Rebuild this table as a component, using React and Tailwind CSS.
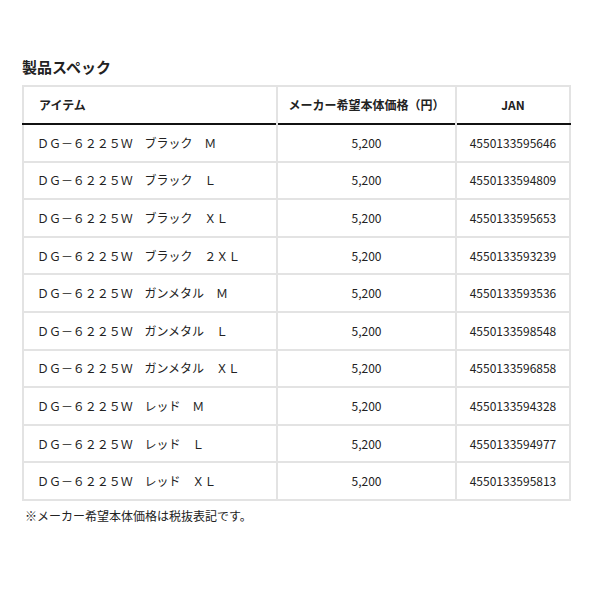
import React from 'react';

const rows = [
  ['ＤＧ－６２２５Ｗ　ブラック　Ｍ', '4550133595646'],
  ['ＤＧ－６２２５Ｗ　ブラック　Ｌ', '4550133594809'],
  ['ＤＧ－６２２５Ｗ　ブラック　ＸＬ', '4550133595653'],
  ['ＤＧ－６２２５Ｗ　ブラック　２ＸＬ', '4550133593239'],
  ['ＤＧ－６２２５Ｗ　ガンメタル　Ｍ', '4550133593536'],
  ['ＤＧ－６２２５Ｗ　ガンメタル　Ｌ', '4550133598548'],
  ['ＤＧ－６２２５Ｗ　ガンメタル　ＸＬ', '4550133596858'],
  ['ＤＧ－６２２５Ｗ　レッド　Ｍ', '4550133594328'],
  ['ＤＧ－６２２５Ｗ　レッド　Ｌ', '4550133594977'],
  ['ＤＧ－６２２５Ｗ　レッド　ＸＬ', '4550133595813'],
];

export default function App() {
  return (
    <div className="w-[600px] h-[600px] bg-white text-[#222] font-['Noto_Sans_CJK_JP',sans-serif]">
      <div className="pl-[22px] pt-[57px] w-[571px]">
        <h2 className="text-[15px] font-bold leading-[20px] h-[28px]">製品スペック</h2>

        <table className="w-[549px] border-collapse border-2 border-[#e3e3e3] table-fixed">
          <colgroup>
            <col className="w-[254px]" />
            <col className="w-[179px]" />
            <col />
          </colgroup>
          <thead>
            <tr className="h-[38px] border-b-2 border-[#111]">
              <th className="text-left pl-[15px] text-[12px] font-bold border-r-2 border-[#e3e3e3]">アイテム</th>
              <th className="text-center text-[12px] font-bold border-r-2 border-[#e3e3e3]">メーカー希望本体価格（円）</th>
              <th className="text-center text-[12px] font-bold">JAN</th>
            </tr>
          </thead>
          <tbody>
            {rows.map(([name, jan]) => (
              <tr key={jan} className="h-[37.6px] border-b-2 border-[#e3e3e3]">
                <td className="pl-[13px] text-[12px] tracking-[-0.05px] border-r-2 border-[#e3e3e3] whitespace-nowrap">{name}</td>
                <td className="text-center text-[12px] border-r-2 border-[#e3e3e3]">5,200</td>
                <td className="text-center text-[12px]">{jan}</td>
              </tr>
            ))}
          </tbody>
        </table>

        <p className="pl-[3px] pt-[6px] text-[12px]">※メーカー希望本体価格は税抜表記です。</p>
      </div>
    </div>
  );
}
